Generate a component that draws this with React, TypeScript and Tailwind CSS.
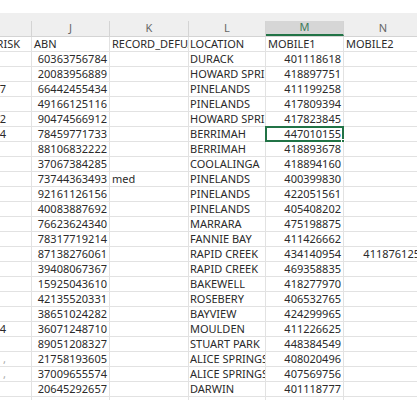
type Row = {
  i?: string;
  j: string;
  k?: string;
  l: string;
  m: string;
  n?: string;
  sel?: boolean;
};

const rows: Row[] = [
  { i: "RISK", j: "ABN", k: "RECORD_DEFUALT", l: "LOCATION", m: "MOBILE1", n: "MOBILE2" },
  { j: "60363756784", l: "DURACK", m: "401118618" },
  { j: "20083956889", l: "HOWARD SPRINGS", m: "418897751" },
  { i: "17", j: "66442455434", l: "PINELANDS", m: "411199258" },
  { j: "49166125116", l: "PINELANDS", m: "417809394" },
  { i: "12", j: "90474566912", l: "HOWARD SPRINGS", m: "417823845" },
  { i: "14", j: "78459771733", l: "BERRIMAH", m: "447010155", sel: true },
  { j: "88106832222", l: "BERRIMAH", m: "418893678" },
  { j: "37067384285", l: "COOLALINGA", m: "418894160" },
  { j: "73744363493", k: "med", l: "PINELANDS", m: "400399830" },
  { j: "92161126156", l: "PINELANDS", m: "422051561" },
  { j: "40083887692", l: "PINELANDS", m: "405408202" },
  { j: "76623624340", l: "MARRARA", m: "475198875" },
  { j: "78317719214", l: "FANNIE BAY", m: "411426662" },
  { j: "87138276061", l: "RAPID CREEK", m: "434140954", n: "411876125" },
  { j: "39408067367", l: "RAPID CREEK", m: "469358835" },
  { j: "15925043610", l: "BAKEWELL", m: "418277970" },
  { j: "42135520331", l: "ROSEBERY", m: "406532765" },
  { j: "38651024282", l: "BAYVIEW", m: "424299965" },
  { i: "14", j: "36071248710", l: "MOULDEN", m: "411226625" },
  { j: "89051208327", l: "STUART PARK", m: "448384549" },
  { i: ",", j: "21758193605", l: "ALICE SPRINGS", m: "408020496" },
  { i: ",", j: "37009655574", l: "ALICE SPRINGS", m: "407569756" },
  { j: "20645292657", l: "DARWIN", m: "401118777" },
  { j: "", l: "", m: "" },
];

const cell = "h-[15px] shrink-0 border-r border-b border-[#e2e2e2] overflow-hidden whitespace-nowrap flex items-center";

const App = () => {
  return (
    <div
      className="w-[417px] h-[400px] overflow-hidden bg-white text-[11px] text-[#2a2a2a]"
      style={{ fontFamily: '"Noto Sans", "Noto Sans CJK SC", sans-serif' }}
    >
      <div className="h-[13px] bg-white" />
      <div className="h-[8px] bg-[#efefef]" />
      {/* column letters */}
      <div className="flex h-[16px] bg-[#efefef] border-b border-[#d4d4d4] text-[#666]">
        <div className="w-[32px] shrink-0 border-r border-[#d4d4d4]" />
        <div className="w-[78px] shrink-0 border-r border-[#d4d4d4] flex items-center justify-center">J</div>
        <div className="w-[79px] shrink-0 border-r border-[#d4d4d4] flex items-center justify-center">K</div>
        <div className="w-[77px] shrink-0 border-r border-[#d4d4d4] flex items-center justify-center">L</div>
        <div className="w-[78px] shrink-0 border-r border-[#d4d4d4] border-b-2 border-b-[#217346] bg-[#d6d6d6] text-[#3d7a5a] flex items-center justify-center">
          M
        </div>
        <div className="w-[78px] shrink-0 flex items-center justify-center">N</div>
      </div>
      {rows.map((r, idx) => {
        const head = idx === 0;
        return (
          <div key={idx} className="flex">
            <div className={`${cell} w-[32px] justify-end ${head ? "pr-[11px]" : "pr-[25px]"} ${r.i === "," ? "text-[#aaa]" : ""}`}>
              {r.i}
            </div>
            <div className={`${cell} w-[78px] ${head ? "pl-[2px]" : "justify-end pr-[2px]"}`}>{r.j}</div>
            <div className={`${cell} w-[79px] pl-[2px]`}>{r.k}</div>
            <div className={`${cell} w-[77px] pl-[1px]`}>{r.l}</div>
            <div className={`${cell} w-[78px] relative overflow-visible ${head ? "pl-[2px]" : "justify-end pr-[2px]"}`}>
              {r.m}
              {r.sel && (
                <div className="absolute -left-px -top-px -right-px -bottom-px border-2 border-[#217346]">
                  <div className="absolute -right-[3px] -bottom-[3px] w-[4px] h-[4px] bg-[#217346] border border-white" />
                </div>
              )}
            </div>
            <div className={`h-[15px] w-[78px] shrink-0 border-b border-[#e2e2e2] whitespace-nowrap flex items-center ${head ? "pl-[2px]" : "justify-end pr-[2px]"}`}>
              {r.n}
            </div>
          </div>
        );
      })}
    </div>
  );
};

export default App;
